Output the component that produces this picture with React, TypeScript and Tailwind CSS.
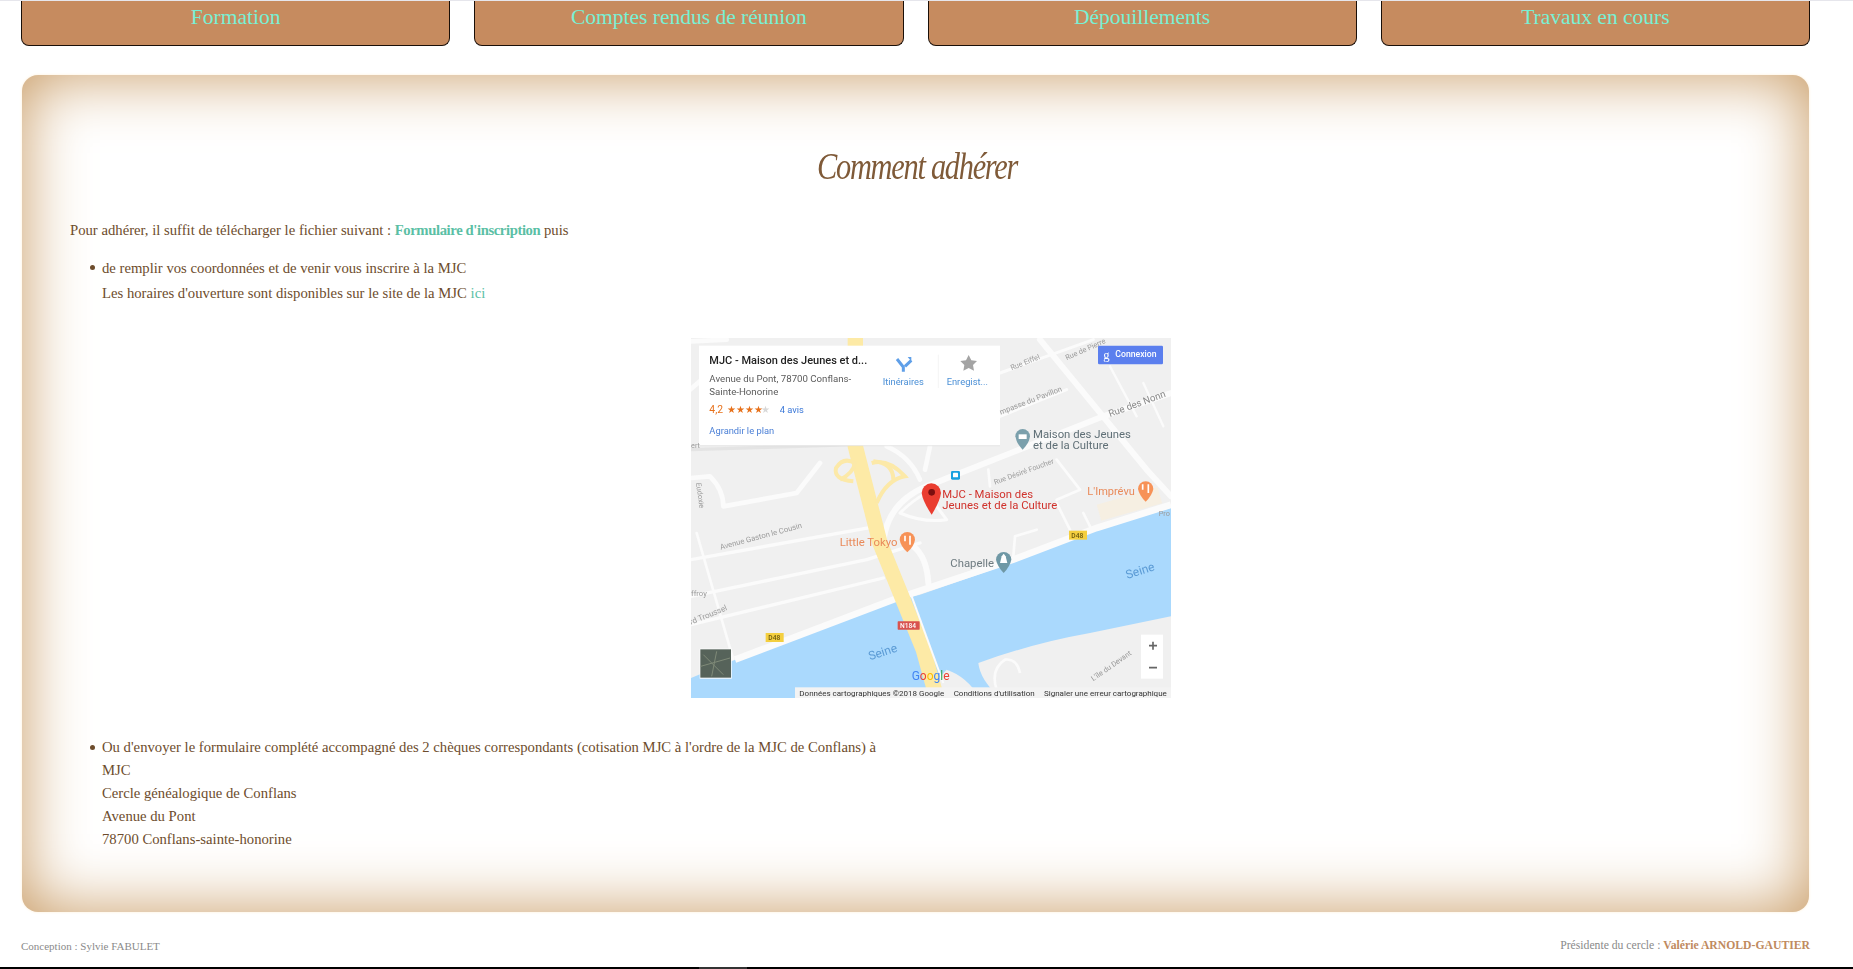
const serif = "font-['Liberation_Serif',serif]";

function MapPicture() {
  return (
    <svg viewBox="33 25 1440 1080" width="480" height="360" className="block blur-[0.4px]" fontFamily="Roboto, Arial, sans-serif">
      <rect x="33" y="25" width="1440" height="1080" fill="#f0f0f0" />
      {/* streets */}
      <g fill="none" stroke="#fbfbfb" strokeLinecap="round" strokeLinejoin="round">
        <path d="M33 690 L590 590" strokeWidth="10" />
        <path d="M33 800 L560 690 L720 640" strokeWidth="10" />
        <path d="M33 885 L610 745" strokeWidth="10" />
        <path d="M33 445 L90 440 Q130 480 130 530 L350 490 L420 400" strokeWidth="14" />
        <path d="M50 610 L160 990" strokeWidth="8" />
        <path d="M610 640 Q620 520 740 470 L1270 260 L1473 190" strokeWidth="18" />
        <path d="M660 550 Q700 510 740 490 L800 570 Q730 580 660 550Z" strokeWidth="9" />
        <path d="M1080 30 L1400 420 L1473 500" strokeWidth="18" />
        <path d="M930 470 L925 420 M1130 390 L1200 480 L1130 510" strokeWidth="8" />
        <path d="M1000 680 L1005 620 L1070 600" strokeWidth="8" />
        <path d="M1130 520 L1170 600 M1210 550 L1230 590" strokeWidth="8" />
        <path d="M960 130 L1240 30 M960 260 L1160 180" strokeWidth="9" />
        <path d="M1290 110 L1370 260 M1390 160 L1450 290" strokeWidth="7" />
        <path d="M620 350 Q690 380 720 450 M750 350 L735 420" strokeWidth="14" />
        <path d="M700 650 Q740 680 745 760" strokeWidth="18" />
        <path d="M33 360 L520 345" stroke="#e4e4e4" strokeWidth="10" />
        <path d="M33 35 L140 30 M100 120 L30 180" strokeWidth="14" />
      </g>
      {/* river */}
      <path d="M33 1045 L165 990 L640 815 L720 795 L1010 695 L1250 600 L1473 535 L1473 1105 L900 1105 Q860 1040 800 1020 L720 1105 L33 1105Z" fill="#aad9fd" />
      <path d="M895 1000 Q1060 940 1230 910 L1473 860 L1473 1105 L960 1105 Q900 1050 895 1000Z" fill="#f0f0f0" />
      <path d="M950 1080 Q930 1020 975 990 Q1010 985 1020 1030" fill="none" stroke="#fbfbfb" strokeWidth="8" />
      <path d="M165 990 L640 810 L1000 690 L1250 595 L1473 525" fill="none" stroke="#fbfbfb" strokeWidth="20" />
      <rect x="1250" y="525" width="190" height="50" fill="#f6efe2" transform="rotate(-16 1250 525)" />
      {/* yellow road */}
      <path d="M526 25 L526 350 L600 640 L730 960 L770 1105" fill="none" stroke="#fdeaa6" strokeWidth="46" />
      <path d="M695 800 L790 1060" fill="none" stroke="#fbfbfb" strokeWidth="6" />
      <g fill="none" stroke="#fce9a8" strokeWidth="12">
        <path d="M520 455 Q460 450 468 415 Q490 380 525 400 Q520 430 480 450" />
        <path d="M575 400 Q625 385 675 440 Q620 450 590 520" />
        <path d="M580 395 Q640 400 640 450" />
      </g>
      {/* info window */}
      <rect x="57" y="48" width="903" height="300" fill="#ffffff" />
      <path d="M57 348 H960" stroke="#dcdcdc" strokeWidth="2" />
      <text x="88" y="104" fontSize="33" fontWeight="500" fill="#222222">MJC - Maison des Jeunes et d...</text>
      <text x="88" y="158" fontSize="29" fill="#5b5b5b">Avenue du Pont, 78700 Conflans-</text>
      <text x="88" y="197" fontSize="29" fill="#5b5b5b">Sainte-Honorine</text>
      <text x="88" y="251" fontSize="31" fill="#e7711b">4,2</text>
      <text x="140" y="249" fontSize="29" fill="#e7711b">★★★★</text>
      <text x="244" y="249" fontSize="29" fill="#d8d8d8">★</text>
      <text x="299" y="251" fontSize="28" fill="#3b78d8">4 avis</text>
      <text x="88" y="314" fontSize="28" fill="#4a7fd6">Agrandir le plan</text>
      <text x="608" y="167" fontSize="28" fill="#4a8fd6">Itinéraires</text>
      <text x="800" y="167" fontSize="28" fill="#4a8fd6">Enregist...</text>
      <path d="M775 75 V175" stroke="#eeeeee" strokeWidth="2" />
      <path d="M651 88 L670 112 V126 M694 92 L675 110" fill="none" stroke="#5f9fe8" strokeWidth="9" />
      <path d="M683 82 L694 82 L694 95Z" fill="#5f9fe8" />
      <path d="M866 76 L874 92 L891 94 L879 106 L882 123 L866 115 L850 123 L853 106 L841 94 L858 92Z" fill="#a4a4a4" />
      {/* connexion */}
      <rect x="1254" y="48" width="195" height="56" rx="4" fill="#5b7fee" />
      <text x="1270" y="88" fontSize="38" fill="#ffffff" fontFamily="Liberation Serif, serif">g</text>
      <text x="1306" y="83" fontSize="26" fontWeight="500" fill="#ffffff">Connexion</text>
      {/* labels */}
      <g fill="#9a9a9a" fontSize="22">
        <text transform="translate(995 122) rotate(-22)">Rue Eiffel</text>
        <text transform="translate(1160 92) rotate(-24)">Rue de Pierre</text>
        <text transform="translate(962 255) rotate(-21)" fontSize="23">mpasse du Pavillon</text>
        <text transform="translate(1290 262) rotate(-20)" fontSize="29" fill="#888888">Rue des Nonn</text>
        <text transform="translate(945 465) rotate(-20)">Rue Désiré Foucher</text>
        <text transform="translate(122 660) rotate(-15)" fontSize="23">Avenue Gaston le Cousin</text>
        <text x="33" y="800" fontSize="23">ffroy</text>
        <text transform="translate(33 885) rotate(-22)" fontSize="24">rd Troussel</text>
        <text transform="translate(1240 1055) rotate(-35)">L'île du Devant</text>
        <text transform="translate(48 460) rotate(82)">Eudoxie</text>
        <text x="1436" y="558">Pro</text>
        <text x="33" y="355">ert</text>
      </g>
      <text x="1059" y="326" fontSize="34" fill="#5f6f76">Maison des Jeunes</text>
      <text x="1059" y="359" fontSize="34" fill="#5f6f76">et de la Culture</text>
      <path d="M1006 320 A22 22 0 0 1 1050 320 Q1048 340 1028 360 Q1008 340 1006 320Z" fill="#7ba0ac" />
      <rect x="1016" y="314" width="24" height="14" fill="#ffffff" />
      <rect x="813" y="424" width="27" height="26" rx="4" fill="#19a0df" />
      <rect x="819" y="429" width="15" height="14" rx="2" fill="#ffffff" />
      <text x="787" y="505" fontSize="34" fill="#d0322c">MJC - Maison des</text>
      <text x="787" y="538" fontSize="34" fill="#d0322c">Jeunes et de la Culture</text>
      <path d="M725 490 A29 29 0 0 1 783 490 Q780 515 755 555 Q728 515 725 490Z" fill="#ea3d30" />
      <circle cx="755" cy="488" r="10" fill="#7a0f0f" />
      <text x="1222" y="495" fontSize="33" fill="#e98a5a">L'Imprévu</text>
      <path d="M1374 478 A23 23 0 0 1 1420 478 Q1416 498 1397 516 Q1378 498 1374 478Z" fill="#f79257" />
      <path d="M1388 464 V480 M1405 464 V490" stroke="#ffffff" strokeWidth="5" />
      <text x="479" y="650" fontSize="34" fill="#e98a5a">Little Tokyo</text>
      <path d="M659 630 A23 23 0 0 1 705 630 Q702 650 682 668 Q662 650 659 630Z" fill="#f79257" />
      <path d="M675 618 V635 M690 618 V645" stroke="#ffffff" strokeWidth="5" />
      <text x="811" y="712" fontSize="34" fill="#6e7b80">Chapelle</text>
      <path d="M948 690 A23 23 0 0 1 994 690 Q990 710 971 730 Q952 710 948 690Z" fill="#6f98a5" />
      <path d="M960 700 L965 680 L971 672 L977 680 L982 700Z" fill="#ffffff" />
      <text transform="translate(1342 748) rotate(-18)" fontSize="36" fill="#5b9bd5">Seine</text>
      <text transform="translate(570 992) rotate(-18)" fontSize="36" fill="#5b9bd5">Seine</text>
      <rect x="1167" y="603" width="54" height="27" fill="#f4cf3f" />
      <text x="1174" y="624" fontSize="20" fontWeight="500" fill="#6b5a10">D48</text>
      <rect x="257" y="910" width="54" height="27" fill="#f4cf3f" />
      <text x="265" y="931" fontSize="20" fontWeight="500" fill="#6b5a10">D48</text>
      <rect x="653" y="875" width="66" height="25" rx="2" fill="#d9534f" />
      <text x="660" y="895" fontSize="20" fontWeight="500" fill="#ffffff">N184</text>
      {/* controls */}
      <rect x="1383" y="915" width="66" height="132" fill="#ffffff" />
      <path d="M1419 936 V960 M1407 948 H1431 M1407 1014 H1431" stroke="#666666" strokeWidth="5" />
      <rect x="59" y="957" width="96" height="90" fill="#ffffff" />
      <rect x="61" y="959" width="92" height="85" fill="#56635a" />
      <path d="M70 975 L130 1035 M110 965 L95 1040 M62 1010 L150 985" stroke="#7f8a78" strokeWidth="3" />
      {/* attribution */}
      <text x="695" y="1052" fontSize="36">
        <tspan fill="#4285f4">G</tspan><tspan fill="#ea4335">o</tspan><tspan fill="#fbbc05">o</tspan><tspan fill="#4285f4">g</tspan><tspan fill="#34a853">l</tspan><tspan fill="#ea4335">e</tspan>
      </text>
      <rect x="345" y="1073" width="1128" height="32" fill="#f3f3f3" />
      <g fontSize="24" fill="#333333">
        <text x="358" y="1098">Données cartographiques ©2018 Google</text>
        <text x="821" y="1098">Conditions d'utilisation</text>
        <text x="1092" y="1098">Signaler une erreur cartographique</text>
      </g>
    </svg>
  );
}

function NavCard({ label }: { label: string }) {
  return (
    <a className={`flex-1 h-[45px] bg-[#c68b5f] border-x border-b-[1.5px] border-[#1a0f08] rounded-b-lg text-center text-[21.5px] leading-[33px] text-[#78f0d4] ${serif}`}>
      {label}
    </a>
  );
}

export default function App() {
  return (
    <div className={`h-[969px] overflow-hidden bg-white flex flex-col text-[#6d4c2c] text-[14.7px] ${serif}`}>
      <div className="h-px bg-[#e6e6ec]" />
      <nav className="flex gap-6 pl-[21px] pr-[43px]">
        <NavCard label="Formation" />
        <NavCard label="Comptes rendus de réunion" />
        <NavCard label="Dépouillements" />
        <NavCard label="Travaux en cours" />
      </nav>
      <main className="mt-[29px] ml-[22px] mr-[44px] h-[837px] px-12 pt-[68px] rounded-[16px] bg-white shadow-[inset_0_0_65px_#c7985f,0_0_3px_#fff0d8]">
        <h1 className="pl-1 text-center text-[38px] leading-[46px] italic font-normal text-[#7f5a38] tracking-[-1.6px]">
          <span className="inline-block scale-x-80">Comment adhérer</span>
        </h1>
        <p className="mt-[29px] leading-[24px]">
          Pour adhérer, il suffit de télécharger le fichier suivant : <a className="font-bold text-[#5bbfa5] tracking-[-0.4px]">Formulaire d'inscription</a> puis
        </p>
        <ul className="mt-[13px] pl-8 list-none">
          <li className="relative before:absolute before:left-[-12px] before:top-[10px] before:w-[5px] before:h-[5px] before:rounded-full before:bg-[#6d4c2c]">
            <p className="leading-[26px]">de remplir vos coordonnées et de venir vous inscrire à la MJC</p>
            <p className="leading-[25px]">Les horaires d'ouverture sont disponibles sur le site de la MJC <a className="text-[#5bbfa5]">ici</a></p>
            <div className="mt-[32px] pr-0.5 flex justify-center"><MapPicture /></div>
          </li>
          <li className="relative mt-[38px] leading-[23px] before:absolute before:left-[-12px] before:top-[9px] before:w-[5px] before:h-[5px] before:rounded-full before:bg-[#6d4c2c]">
            Ou d'envoyer le formulaire complété accompagné des 2 chèques correspondants (cotisation MJC à l'ordre de la MJC de Conflans) à
            <br />MJC
            <br />Cercle généalogique de Conflans
            <br />Avenue du Pont
            <br />78700 Conflans-sainte-honorine
          </li>
        </ul>
      </main>
      <footer className="flex-1 flex justify-between items-start ml-[21px] mr-[43px] pt-[26px] leading-4 text-[#8a8a8a]">
        <span className="text-[11px]">Conception : Sylvie FABULET</span>
        <span className="text-[11.7px]">Présidente du cercle : <b className="text-[#c08a5e]">Valérie ARNOLD-GAUTIER</b></span>
      </footer>
      <div className="h-0.5 bg-black flex shrink-0 pl-[699px]"><div className="w-[48px] h-full bg-[#333333]" /></div>
    </div>
  );
}
